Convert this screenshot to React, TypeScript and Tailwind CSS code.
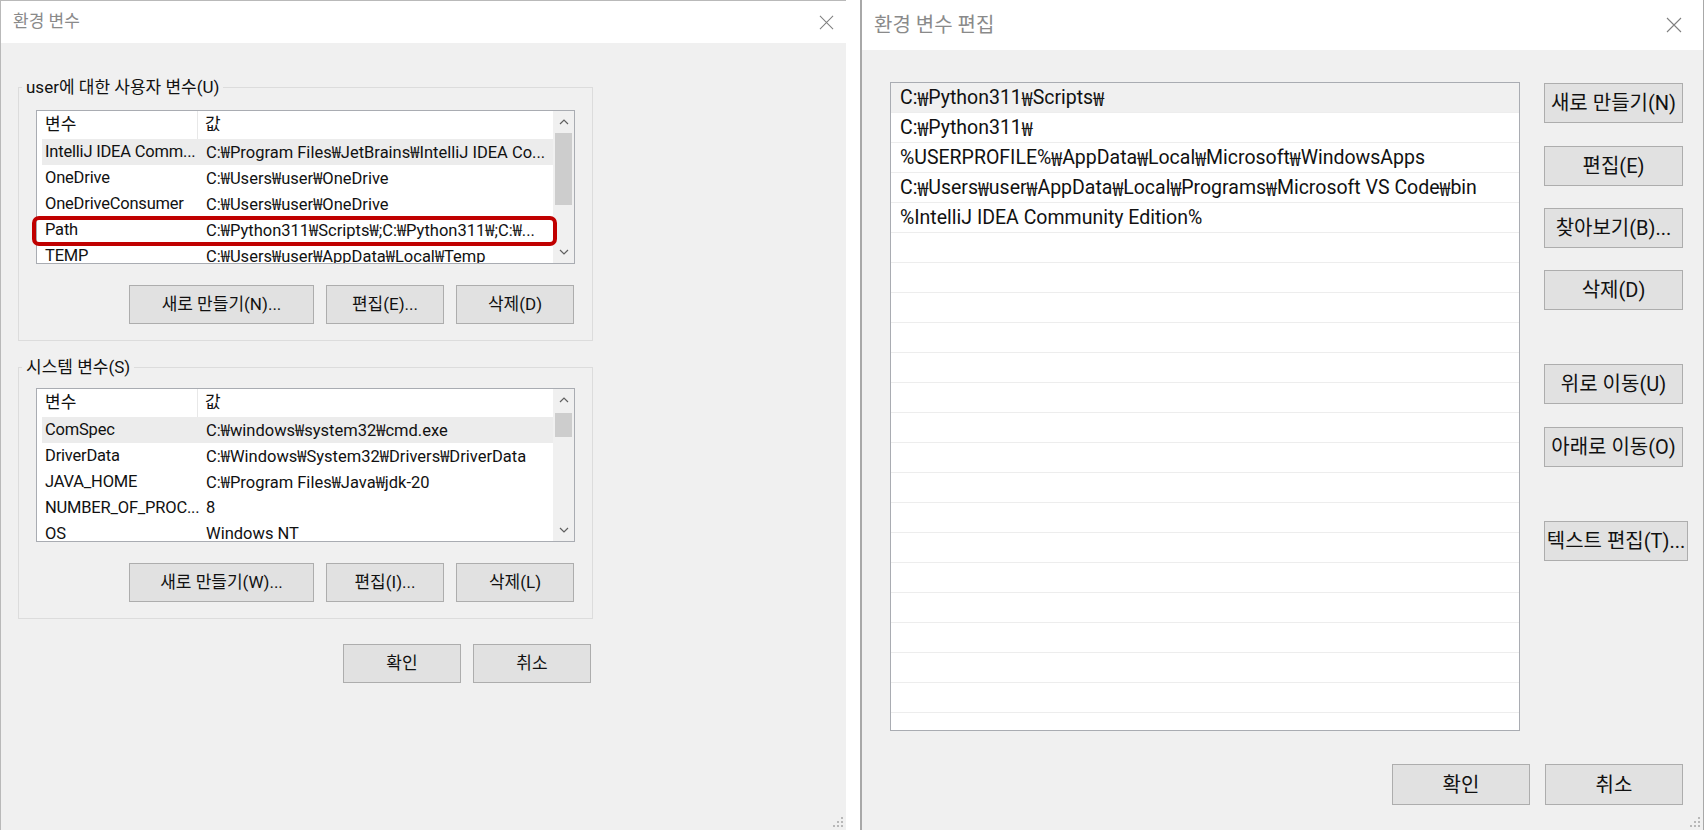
import React from 'react';

const userVars: [string, string][] = [
  ['IntelliJ IDEA Comm...', 'C:₩Program Files₩JetBrains₩IntelliJ IDEA Co...'],
  ['OneDrive', 'C:₩Users₩user₩OneDrive'],
  ['OneDriveConsumer', 'C:₩Users₩user₩OneDrive'],
  ['Path', 'C:₩Python311₩Scripts₩;C:₩Python311₩;C:₩...'],
  ['TEMP', 'C:₩Users₩user₩AppData₩Local₩Temp'],
];

const systemVars: [string, string][] = [
  ['ComSpec', 'C:₩windows₩system32₩cmd.exe'],
  ['DriverData', 'C:₩Windows₩System32₩Drivers₩DriverData'],
  ['JAVA_HOME', 'C:₩Program Files₩Java₩jdk-20'],
  ['NUMBER_OF_PROC...', '8'],
  ['OS', 'Windows NT'],
];

const pathEntries = [
  'C:₩Python311₩Scripts₩',
  'C:₩Python311₩',
  '%USERPROFILE%₩AppData₩Local₩Microsoft₩WindowsApps',
  'C:₩Users₩user₩AppData₩Local₩Programs₩Microsoft VS Code₩bin',
  '%IntelliJ IDEA Community Edition%',
];

// Roboto's won sign is too wide, take the narrower CJK one
function PathText({ text }: { text: string }) {
  const parts = text.split('₩');
  return (
    <>
      {parts.map((p, i) => (
        <React.Fragment key={i}>
          {i > 0 && <span className="font-['Noto_Sans_CJK_KR',sans-serif]">₩</span>}
          {p}
        </React.Fragment>
      ))}
    </>
  );
}

function CloseIcon({ size }: { size: number }) {
  return (
    <svg width={size} height={size} viewBox="0 0 16 16" fill="none">
      <path d="M1 1L15 15M15 1L1 15" stroke="#7f7f7f" strokeWidth="1.1" />
    </svg>
  );
}

function Chevron({ up }: { up?: boolean }) {
  return (
    <svg width="10" height="6" viewBox="0 0 10 6" fill="none">
      <path d={up ? 'M1 5L5 1L9 5' : 'M1 1L5 5L9 1'} stroke="#606060" strokeWidth="1.2" />
    </svg>
  );
}

function Grip() {
  return (
    <svg width="12" height="12" viewBox="0 0 12 12">
      <rect x="9" y="1" width="2" height="2" fill="#b8b8b8" />
      <rect x="5" y="5" width="2" height="2" fill="#b8b8b8" />
      <rect x="9" y="5" width="2" height="2" fill="#b8b8b8" />
      <rect x="1" y="9" width="2" height="2" fill="#b8b8b8" />
      <rect x="5" y="9" width="2" height="2" fill="#b8b8b8" />
      <rect x="9" y="9" width="2" height="2" fill="#b8b8b8" />
    </svg>
  );
}

function Btn({ children, className }: { children: React.ReactNode; className: string }) {
  return (
    <div
      className={`flex shrink-0 items-center justify-center whitespace-nowrap border border-[#adadad] bg-[#e1e1e1] text-[#111111] ${className}`}
    >
      {children}
    </div>
  );
}

function Scrollbar({ thumbClass }: { thumbClass: string }) {
  return (
    <div className="flex w-[21px] shrink-0 flex-col bg-[#f0f0f0]">
      <div className="flex h-[22px] items-center justify-center">
        <Chevron up />
      </div>
      <div className={`mx-[2px] bg-[#cdcdcd] ${thumbClass}`} />
      <div className="flex-1" />
      <div className="flex h-[22px] items-center justify-center">
        <Chevron />
      </div>
    </div>
  );
}

function VarList({ rows, thumbClass, marked }: { rows: [string, string][]; thumbClass: string; marked?: boolean }) {
  return (
    <div className="relative flex h-[154px] w-[539px] border border-[#a9acb2] bg-white">
      <div className="flex-1 overflow-hidden">
        <div className="flex h-[28px] items-center">
          <div className="flex h-full w-[161px] shrink-0 items-center border-r border-[#e8e8e8] pl-[8px]">변수</div>
          <div className="pl-[7px]">값</div>
        </div>
        {rows.map(([k, v], i) => (
          <div
            key={k}
            className={`ml-[5px] flex h-[26px] items-center whitespace-nowrap text-[16.5px] ${i === 0 ? 'bg-[#ececec]' : ''}`}
          >
            <div className="w-[160px] shrink-0 overflow-hidden pl-[3px] tracking-[-0.2px]">{k}</div>
            <div className="pl-[4px]">
              <PathText text={v} />
            </div>
          </div>
        ))}
      </div>
      <Scrollbar thumbClass={thumbClass} />
      {marked && (
        <div className="absolute left-[-5px] top-[105px] h-[30px] w-[525px] rounded-[7px] border-[4px] border-[#c00000]" />
      )}
    </div>
  );
}

function GroupBox({
  label,
  rows,
  thumbClass,
  marked,
  buttons,
  listTop,
}: {
  label: string;
  rows: [string, string][];
  thumbClass: string;
  marked?: boolean;
  buttons: string[];
  listTop: string;
}) {
  return (
    <fieldset className="w-[573px] border border-[#dcdcdc] pb-[16px]">
      <legend className="ml-[3px] px-[4px] leading-[20px]">{label}</legend>
      <div className={`px-[17px] ${listTop}`}>
        <VarList rows={rows} thumbClass={thumbClass} marked={marked} />
        <div className="mt-[21px] flex justify-end gap-[12px] pr-[1px]">
          <Btn className="h-[39px] w-[185px]">{buttons[0]}</Btn>
          <Btn className="h-[39px] w-[118px]">{buttons[1]}</Btn>
          <Btn className="h-[39px] w-[118px]">{buttons[2]}</Btn>
        </div>
      </div>
    </fieldset>
  );
}

function EnvWindow() {
  return (
    <div className="relative flex h-full w-[846px] shrink-0 flex-col border-l border-t border-[#b9b9b9] text-[17px] text-[#111111]">
      <div className="flex h-[42px] items-center justify-between bg-white pl-[12px] pr-[12px]">
        <span className="text-[#8a8a8a]">환경 변수</span>
        <CloseIcon size={15} />
      </div>
      <div className="flex-1 bg-[#f0f0f0] pl-[17px] pt-[34px]">
        <GroupBox
          label="user에 대한 사용자 변수(U)"
          rows={userVars}
          thumbClass="h-[72px]"
          marked
          buttons={['새로 만들기(N)...', '편집(E)...', '삭제(D)']}
          listTop="mt-[13px]"
        />
        <div className="mt-[16px]">
          <GroupBox
            label="시스템 변수(S)"
            rows={systemVars}
            thumbClass="mt-[2px] h-[24px]"
            buttons={['새로 만들기(W)...', '편집(I)...', '삭제(L)']}
            listTop="mt-[11px]"
          />
        </div>
        <div className="mt-[25px] flex w-[573px] justify-end gap-[12px]">
          <Btn className="h-[39px] w-[118px]">확인</Btn>
          <Btn className="h-[39px] w-[118px]">취소</Btn>
        </div>
      </div>
      <div className="absolute bottom-[2px] right-[2px]">
        <Grip />
      </div>
    </div>
  );
}

function EditWindow() {
  const blanks = Array.from({ length: 17 }, (_, i) => i);
  return (
    <div className="relative flex h-full w-[844px] shrink-0 flex-col border-l-2 border-r border-[#a8a8a8] text-[20px] text-[#111111]">
      <div className="flex h-[50px] items-center justify-between bg-white pl-[12px] pr-[21px]">
        <span className="text-[#8a8a8a]">환경 변수 편집</span>
        <CloseIcon size={16} />
      </div>
      <div className="flex flex-1 flex-col bg-[#f0f0f0] pl-[28px] pr-[15px] pt-[32px]">
        <div className="flex">
          <div className="h-[649px] w-[630px] shrink-0 overflow-hidden border border-[#a9acb2] bg-white">
            {pathEntries.map((p, i) => (
              <div
                key={p}
                className={`flex h-[30px] items-center whitespace-nowrap border-b border-[#ededed] pl-[9px] text-[19.5px] ${i === 0 ? 'bg-[#f0f0f0]' : ''}`}
              >
                <PathText text={p} />
              </div>
            ))}
            {blanks.map((i) => (
              <div key={i} className="h-[30px] border-b border-[#ededed]" />
            ))}
          </div>
          <div className="ml-[24px] flex flex-col pt-[1px]">
            <Btn className="h-[40px] w-[139px]">새로 만들기(N)</Btn>
            <Btn className="mt-[23px] h-[40px] w-[139px]">편집(E)</Btn>
            <Btn className="mt-[22px] h-[40px] w-[139px]">찾아보기(B)...</Btn>
            <Btn className="mt-[22px] h-[40px] w-[139px]">삭제(D)</Btn>
            <Btn className="mt-[54px] h-[40px] w-[139px]">위로 이동(U)</Btn>
            <Btn className="mt-[23px] h-[40px] w-[139px]">아래로 이동(O)</Btn>
            <Btn className="mt-[54px] h-[40px] w-[144px]">텍스트 편집(T)...</Btn>
          </div>
        </div>
        <div className="mr-[5px] mt-[33px] flex justify-end gap-[15px]">
          <Btn className="h-[41px] w-[138px]">확인</Btn>
          <Btn className="h-[41px] w-[138px]">취소</Btn>
        </div>
      </div>
      <div className="absolute bottom-[2px] right-[2px]">
        <Grip />
      </div>
    </div>
  );
}

export default function App() {
  return (
    <div className="flex h-[830px] w-[1704px] overflow-hidden bg-white font-['Roboto','Noto_Sans_CJK_KR',sans-serif]">
      <EnvWindow />
      <div className="ml-[14px] h-full">
        <EditWindow />
      </div>
    </div>
  );
}
